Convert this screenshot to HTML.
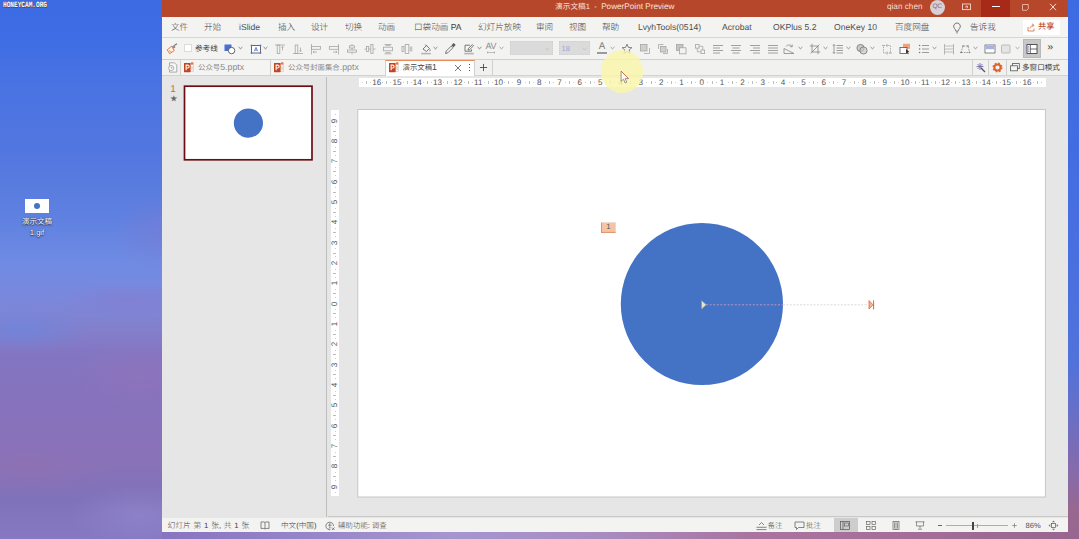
<!DOCTYPE html><html lang="zh"><head><meta charset="utf-8"><title>演示文稿1 - PowerPoint Preview</title><style>
*{margin:0;padding:0;box-sizing:border-box}
html,body{width:1079px;height:539px;overflow:hidden}
body{position:relative;text-rendering:geometricPrecision;-webkit-font-smoothing:antialiased;font-family:"Liberation Sans","Noto Sans CJK SC",sans-serif;
 background:#6a78d6;}
.abs{position:absolute}
.t{position:absolute;white-space:nowrap;line-height:1}
#desk{position:absolute;left:0;top:0;width:1079px;height:539px;background:#8577bd}
#dl{position:absolute;left:0;top:0;width:163px;height:539px;background:
  radial-gradient(ellipse 45px 40px at 160px 232px, rgba(124,122,208,.5), rgba(124,122,208,0) 100%),
  radial-gradient(ellipse 70px 22px at 20px 330px, rgba(108,134,222,.75), rgba(108,134,222,0) 100%),
  radial-gradient(ellipse 80px 18px at 130px 300px, rgba(134,124,206,.6), rgba(134,124,206,0) 100%),
  radial-gradient(ellipse 70px 35px at 140px 375px, rgba(150,116,184,.5), rgba(150,116,184,0) 100%),
  radial-gradient(ellipse 80px 25px at 30px 470px, rgba(150,112,176,.45), rgba(150,112,176,0) 100%),
  radial-gradient(ellipse 70px 30px at 140px 515px, rgba(148,138,208,.6), rgba(148,138,208,0) 100%),
  linear-gradient(180deg,#3d6be4 0px,#3f6de4 45px,#4872e3 75px,#5377df 155px,#5e80e0 215px,#6f8be3 262px,#7a88dc 300px,#8380cc 328px,#8375c2 355px,#8672bd 400px,#8a72b8 455px,#8072ba 500px,#8679c2 539px)}
#dr{position:absolute;left:1067px;top:0;width:12px;height:539px;background:
  linear-gradient(180deg,#3d6be4 0px,#426de2 150px,#4a70df 270px,#5072da 360px,#6270cc 400px,#766cba 440px,#8a6aa6 480px,#98688f 510px,#9a6690 539px)}
#db{position:absolute;left:162px;top:530px;width:906px;height:9px;background:
  linear-gradient(90deg,#8873c0 0px,#9585c8 140px,#a596cf 290px,#a88cc0 440px,#a9749f 590px,#a46e98 740px,#98668f 906px)}
#win{position:absolute;left:162px;top:0;width:906px;height:532px;background:#e6e6e6;overflow:hidden}
#title{position:absolute;left:0;top:0;width:906px;height:17px;background:#b7472a}
#menu{position:absolute;left:0;top:17px;width:906px;height:20px;background:#f3f3f2}
#tool{position:absolute;left:0;top:37px;width:906px;height:22px;background:#f3f3f2;border-top:1px solid #d6d6d6}
#tabs{position:absolute;left:0;top:59px;width:906px;height:17px;background:#f1f1f0;border-top:1px solid #cfcfcf;border-bottom:1px solid #d2d2d2}
#status{position:absolute;left:0;top:518px;width:906px;height:14px;background:#f3f3f2}
.m{font-size:8.6px;color:#404040;top:5.5px;font-weight:300}
.s{font-size:7.8px;color:#444;top:4px;font-weight:300}
.tb{font-size:8px;color:#444}
</style></head><body>
<div id="desk"><div id="dl"></div><div id="dr"></div><div id="db"></div></div>
<div class="t" style="left:3px;top:1.6px;font-family:'Liberation Mono',monospace;font-weight:bold;font-size:6.2px;letter-spacing:-0.05px;color:#fff;text-shadow:0.6px 0.5px 0 #55503f,0 0 1px #334;transform:scaleY(1.32);transform-origin:0 0">HONEYCAM.ORG</div>
<div class="abs" style="left:25px;top:199px;width:24px;height:13.5px;background:#fff"></div>
<div class="abs" style="left:33.7px;top:203px;width:6px;height:6px;border-radius:50%;background:#4472c4"></div>
<div class="t" style="left:7px;width:60px;text-align:center;top:217.5px;font-size:7.6px;color:#fff;text-shadow:0 1px 1.5px #223,0 0 1px #223">演示文稿</div>
<div class="t" style="left:7px;width:60px;text-align:center;top:228.5px;font-size:7.6px;color:#fff;text-shadow:0 1px 1.5px #223,0 0 1px #223">1.gif</div>
<div id="win">
<div id="title">
<div class="t" style="left:393px;top:2.8px;font-size:7.7px;color:#f8e4dd;font-weight:400">演示文稿1&nbsp; -&nbsp; <span style="font-size:8.2px;font-weight:400">PowerPoint Preview</span></div>
<div class="t" style="left:725px;top:2.8px;font-size:8.2px;color:#f6dcd4">qian chen</div>
<div class="abs" style="left:767.5px;top:-0.5px;width:15px;height:15px;border-radius:50%;background:#d9cfd6"></div>
<div class="t" style="left:770.5px;top:4px;font-size:6.5px;color:#8a6a80;letter-spacing:-0.3px">QC</div>
<svg class="abs" style="left:799px;top:2px" width="11" height="10" viewBox="0 0 11 10"><rect x="1.5" y="2" width="8" height="5.6" fill="none" stroke="#f3d5cb" stroke-width="0.9"/><path d="M4 4.8h3M5.500 3.500l1.500 1.300-1.500 1.300" stroke="#f3d5cb" stroke-width="0.8" fill="none"/></svg>
<div class="abs" style="left:819px;top:0;width:29px;height:17px;background:#a72a18"></div>
<div class="abs" style="left:830px;top:6px;width:7.5px;height:1.3px;background:#fff"></div>
<svg class="abs" style="left:858.5px;top:2.5px" width="9" height="9" viewBox="0 0 9 9"><path d="M1.500 1.500h5.800v4.300l-1.500 1.500h-4.300z" fill="none" stroke="#f0c8ba" stroke-width="0.8"/></svg>
<svg class="abs" style="left:887px;top:2.5px" width="8" height="8" viewBox="0 0 8 8"><path d="M1 0.8l6 6.4M7 0.8l-6 6.4" fill="none" stroke="#f6dcd4" stroke-width="1"/></svg>
</div>
<div id="menu">
<div class="t m" style="left:9px">文件</div>
<div class="t m" style="left:42px">开始</div>
<div class="t m" style="left:77px;color:#505050">iSlide</div>
<div class="t m" style="left:116px">插入</div>
<div class="t m" style="left:149px">设计</div>
<div class="t m" style="left:183px">切换</div>
<div class="t m" style="left:216px">动画</div>
<div class="t m" style="left:252px">口袋动画 PA</div>
<div class="t m" style="left:316px">幻灯片放映</div>
<div class="t m" style="left:374px">审阅</div>
<div class="t m" style="left:407px">视图</div>
<div class="t m" style="left:440px">帮助</div>
<div class="t m" style="left:476px;color:#505050">LvyhTools(0514)</div>
<div class="t m" style="left:560px;color:#505050">Acrobat</div>
<div class="t m" style="left:611px;color:#505050">OKPlus 5.2</div>
<div class="t m" style="left:672px;color:#505050">OneKey 10</div>
<div class="t m" style="left:733px">百度网盘</div>
<div class="t m" style="left:808px">告诉我</div>
<svg class="abs" style="left:790px;top:5px" width="10" height="13" viewBox="0 0 10 13"><path d="M5 1a3.300 3.300 0 0 0-2.300 5.700c.6.700 1 1.500 1.200 2.500h2.200c.2-1 .6-1.800 1.200-2.500A3.300 3.300 0 0 0 5 1z" fill="none" stroke="#5a5a5a" stroke-width="0.8"/><path d="M4 10.500h2l-1 1.300z" fill="#5a5a5a"/></svg>
<div class="abs" style="left:861px;top:2.5px;width:36.5px;height:15px;background:#fff"></div>
<svg class="abs" style="left:865px;top:5.5px" width="9" height="9" viewBox="0 0 9 9"><path d="M1 4v4h6V5.5" fill="none" stroke="#d3673e" stroke-width="0.8"/><path d="M3 5.5c.4-2 1.8-3 3.4-3.2M5 0.8l2 1.5-1.6 1.8" fill="none" stroke="#d3673e" stroke-width="0.8"/></svg>
<div class="t" style="left:876px;top:5.5px;font-size:8.2px;color:#c04e26;font-weight:500">共享</div>
</div>
<div id="tool"></div>
<svg class="abs" style="left:4px;top:42.5px" width="12" height="12" viewBox="0 0 12 12"><path d="M1.2 6.800l4.300-3.600 2.800 4.300-4.600 3.200z" fill="#fff3ea" stroke="#e8773c" stroke-width="1" stroke-linejoin="round"/><path d="M3 7.500l2.600 1.500" stroke="#e8773c" stroke-width="0.700"/><path d="M6 3.600l2-1.600 1.500 2.200-2 1.500z" fill="#8a8a8a"/><path d="M8.300 2.500l2.700-1.700" stroke="#777" stroke-width="1.300"/></svg>
<div class="abs" style="left:21.7px;top:44.3px;width:8px;height:8px;background:#fff;border:1px solid #dcdcdc"></div>
<div class="t" style="left:33px;top:44.6px;font-size:7.6px;color:#333">参考线</div>
<svg class="abs" style="left:61.5px;top:42.5px" width="12" height="12" viewBox="0 0 12 12"><rect x="0.5" y="1.5" width="7" height="6.5" fill="#4a6fd1"/><circle cx="7.6" cy="7.6" r="3.2" fill="#fff" stroke="#444" stroke-width="0.8"/></svg>
<svg class="abs" style="left:75.8px;top:46px" width="5" height="4" viewBox="0 0 5 4"><path d="M0.6 1l1.9 1.8L4.4 1" fill="none" stroke="#666" stroke-width="0.8"/></svg>
<svg class="abs" style="left:87.7px;top:42.5px" width="12" height="12" viewBox="0 0 12 12"><rect x="1.5" y="2.5" width="9" height="7.5" fill="#fff" stroke="#444" stroke-width="0.8"/><g fill="#5a78d8"><circle cx="1.5" cy="2.5" r="0.9"/><circle cx="10.5" cy="2.5" r="0.9"/><circle cx="1.5" cy="10" r="0.9"/><circle cx="10.5" cy="10" r="0.9"/></g><path d="M4.3 8.3l1.7-4 1.7 4M4.9 7h2.2" fill="none" stroke="#4a6fd1" stroke-width="0.8"/></svg>
<svg class="abs" style="left:100.8px;top:46px" width="5" height="4" viewBox="0 0 5 4"><path d="M0.6 1l1.9 1.8L4.4 1" fill="none" stroke="#666" stroke-width="0.8"/></svg>
<svg class="abs" style="left:112px;top:42.5px" width="12" height="12" viewBox="0 0 12 12"><path d="M1 2h10" fill="none" stroke="#a6a6a6" stroke-width="0.8"/><rect x="3.2" y="2" width="2.6" height="8.5" fill="none" stroke="#a6a6a6" stroke-width="0.8"/><path d="M8.5 7.5v-4M7.5 4.5l1-1.2 1 1.2" fill="none" stroke="#a6a6a6" stroke-width="0.8"/></svg>
<svg class="abs" style="left:129.8px;top:42.5px" width="12" height="12" viewBox="0 0 12 12"><path d="M1 10.5h10" fill="none" stroke="#a6a6a6" stroke-width="0.8"/><rect x="3.2" y="2" width="2.6" height="8.5" fill="none" stroke="#a6a6a6" stroke-width="0.8"/><path d="M8.5 4.5v4M7.5 7.5l1 1.2 1-1.2" fill="none" stroke="#a6a6a6" stroke-width="0.8"/></svg>
<svg class="abs" style="left:147.6px;top:42.5px" width="12" height="12" viewBox="0 0 12 12"><path d="M1.5 1v10.5" fill="none" stroke="#a6a6a6" stroke-width="0.8"/><rect x="1.5" y="3.5" width="9" height="2.8" fill="none" stroke="#a6a6a6" stroke-width="0.8"/><path d="M7 9h-4M4.2 8l-1.2 1 1.2 1" fill="none" stroke="#a6a6a6" stroke-width="0.8"/></svg>
<svg class="abs" style="left:166.4px;top:42.5px" width="12" height="12" viewBox="0 0 12 12"><path d="M10.5 1v10.5" fill="none" stroke="#a6a6a6" stroke-width="0.8"/><rect x="1.5" y="3.5" width="9" height="2.8" fill="none" stroke="#a6a6a6" stroke-width="0.8"/><path d="M5 9h4M7.8 8l1.2 1-1.2 1" fill="none" stroke="#a6a6a6" stroke-width="0.8"/></svg>
<svg class="abs" style="left:184.2px;top:42.5px" width="12" height="12" viewBox="0 0 12 12"><path d="M6 1v10.5" fill="none" stroke="#a6a6a6" stroke-width="0.8"/><rect x="3.5" y="2.8" width="5" height="2.2" fill="#f3f3f2" stroke="#a6a6a6" stroke-width="0.8"/><rect x="1.5" y="7" width="9" height="2.2" fill="#f3f3f2" stroke="#a6a6a6" stroke-width="0.8"/></svg>
<svg class="abs" style="left:202px;top:42.5px" width="12" height="12" viewBox="0 0 12 12"><path d="M0.5 6h11" fill="none" stroke="#a6a6a6" stroke-width="0.8"/><rect x="2.5" y="3.5" width="2.2" height="5" fill="#f3f3f2" stroke="#a6a6a6" stroke-width="0.8"/><rect x="6.8" y="1.5" width="2.2" height="9" fill="#f3f3f2" stroke="#a6a6a6" stroke-width="0.8"/></svg>
<svg class="abs" style="left:220px;top:42.5px" width="12" height="12" viewBox="0 0 12 12"><path d="M2.5 1.5h7M2.5 10.8h7" fill="none" stroke="#a6a6a6" stroke-width="0.8"/><rect x="1.5" y="4.2" width="9" height="3.6" fill="none" stroke="#a6a6a6" stroke-width="0.8"/><path d="M3.5 2.6h5M3.5 9.6h5" fill="none" stroke="#a6a6a6" stroke-width="0.8"/></svg>
<svg class="abs" style="left:239px;top:42.5px" width="12" height="12" viewBox="0 0 12 12"><rect x="4.2" y="1.5" width="3.6" height="9" fill="none" stroke="#a6a6a6" stroke-width="0.8"/><rect x="1" y="3.5" width="2" height="5" fill="none" stroke="#a6a6a6" stroke-width="0.8"/><path d="M9.3 3.5v5M10.8 3.5v5" fill="none" stroke="#a6a6a6" stroke-width="0.8"/></svg>
<svg class="abs" style="left:257.5px;top:42.5px" width="12" height="12" viewBox="0 0 12 12"><path d="M3 6l3.5-3.5 3 3L6.5 8.5z" fill="none" stroke="#5a5a5a" stroke-width="0.8"/><path d="M5.2 1.5l2 2" fill="none" stroke="#5a5a5a" stroke-width="0.8"/><path d="M10 6.5v1.6" fill="none" stroke="#5a5a5a" stroke-width="0.8"/><rect x="1.2" y="9.8" width="9.6" height="1.6" fill="#b5b5b5"/></svg>
<svg class="abs" style="left:271px;top:46px" width="5" height="4" viewBox="0 0 5 4"><path d="M0.6 1l1.9 1.8L4.4 1" fill="none" stroke="#666" stroke-width="0.8"/></svg>
<svg class="abs" style="left:281.5px;top:42px" width="13" height="13" viewBox="0 0 13 13"><path d="M1.5 11.5l.7-2.4 5-5 1.700 1.700-5 5z" fill="none" stroke="#5a5a5a" stroke-width="0.8"/><path d="M7.400 3.300l2.300-2.300 2 2-2.300 2.300z" fill="#5a5a5a"/></svg>
<svg class="abs" style="left:301px;top:42.5px" width="12" height="12" viewBox="0 0 12 12"><path d="M2 2.2h5M2 2.2v6h6.5V6.5" fill="none" stroke="#5a5a5a" stroke-width="0.8"/><path d="M5 7l.5-1.6 3.8-3.8 1.2 1.2-3.8 3.8z" fill="none" stroke="#5a5a5a" stroke-width="0.8"/><rect x="1.2" y="9.8" width="9.6" height="1.6" fill="#b5b5b5"/></svg>
<svg class="abs" style="left:314.5px;top:46px" width="5" height="4" viewBox="0 0 5 4"><path d="M0.6 1l1.9 1.8L4.4 1" fill="none" stroke="#666" stroke-width="0.8"/></svg>
<div class="t" style="left:323.6px;top:42px;font-size:9px;color:#8c8c8c;letter-spacing:-0.500px">AV</div>
<svg class="abs" style="left:323.7px;top:50.8px" width="10" height="3" viewBox="0 0 10 3"><path d="M1 1.5h8M2.2 0.4l-1.2 1.1 1.2 1.1M7.8 0.4l1.2 1.1-1.2 1.1" fill="none" stroke="#9a9a9a" stroke-width="0.6"/></svg>
<svg class="abs" style="left:337.3px;top:46px" width="5" height="4" viewBox="0 0 5 4"><path d="M0.6 1l1.9 1.8L4.4 1" fill="none" stroke="#888" stroke-width="0.8"/></svg>
<div class="abs" style="left:348.4px;top:40.5px;width:43px;height:14.5px;background:#dbdbdb;border:1px dotted #d0d0d0"></div>
<div class="abs" style="left:397px;top:40.5px;width:31px;height:14.5px;background:#dbdbdb;border:1px dotted #d0d0d0"></div>
<div class="t" style="left:399.5px;top:44.5px;font-size:7.5px;color:#9aa6d8">18</div>
<svg class="abs" style="left:382.5px;top:46.5px" width="5" height="4" viewBox="0 0 5 4"><path d="M0.6 1l1.9 1.8L4.4 1" fill="none" stroke="#bdbdbd" stroke-width="0.8"/></svg>
<svg class="abs" style="left:419.5px;top:46.5px" width="5" height="4" viewBox="0 0 5 4"><path d="M0.6 1l1.9 1.8L4.4 1" fill="none" stroke="#bdbdbd" stroke-width="0.8"/></svg>
<div class="t" style="left:436.8px;top:42.4px;font-size:9.700px;color:#7c7c7c">A</div>
<div class="abs" style="left:435px;top:52.3px;width:10px;height:1.6px;background:#9a9a9a"></div>
<svg class="abs" style="left:447.5px;top:46px" width="5" height="4" viewBox="0 0 5 4"><path d="M0.6 1l1.9 1.8L4.4 1" fill="none" stroke="#888" stroke-width="0.8"/></svg>
<svg class="abs" style="left:458.7px;top:42.5px" width="12" height="12" viewBox="0 0 12 12"><path d="M6 1.2l1.4 3.2 3.4.3-2.6 2.2.8 3.4L6 8.5 3 10.3l.8-3.4L1.2 4.7l3.4-.3z" fill="none" stroke="#666" stroke-width="0.8"/></svg>
<svg class="abs" style="left:477px;top:42.5px" width="12" height="12" viewBox="0 0 12 12"><rect x="1.5" y="1.5" width="6.5" height="6.5" fill="#cfcfcf" stroke="#a6a6a6" stroke-width="0.8"/><path d="M10.5 5v5.5H5" fill="none" stroke="#a6a6a6" stroke-width="0.8"/></svg>
<svg class="abs" style="left:495.4px;top:42.5px" width="12" height="12" viewBox="0 0 12 12"><path d="M1.5 6V1.5h5" fill="none" stroke="#a6a6a6" stroke-width="0.8"/><rect x="3.5" y="3.5" width="5.5" height="5.5" fill="#cfcfcf" stroke="#a6a6a6" stroke-width="0.8"/><path d="M10.5 6v4.5H6" fill="none" stroke="#a6a6a6" stroke-width="0.8"/></svg>
<svg class="abs" style="left:513px;top:42.5px" width="12" height="12" viewBox="0 0 12 12"><rect x="1.5" y="1.5" width="6.5" height="6" fill="#c4c4c4" stroke="#a6a6a6" stroke-width="0.8"/><rect x="4.5" y="4.8" width="6.5" height="6" fill="#f3f3f2" stroke="#a6a6a6" stroke-width="0.8"/></svg>
<svg class="abs" style="left:531.6px;top:42.5px" width="12" height="12" viewBox="0 0 12 12"><rect x="1.5" y="1.5" width="3.6" height="3.6" fill="none" stroke="#a6a6a6" stroke-width="0.8"/><rect x="7" y="7" width="3.6" height="3.6" fill="none" stroke="#a6a6a6" stroke-width="0.8"/><path d="M3.3 5.1v3.7h3.7M8.8 7V3.3H5.1" fill="none" stroke="#a6a6a6" stroke-width="0.8"/></svg>
<svg class="abs" style="left:549.9px;top:42.5px" width="12" height="12" viewBox="0 0 12 12"><path d="M1 2.5h10M1 5h7M1 7.5h10M1 10h7" fill="none" stroke="#8c8c8c" stroke-width="0.8"/></svg>
<svg class="abs" style="left:568px;top:42.5px" width="12" height="12" viewBox="0 0 12 12"><path d="M1 2.5h10M2.5 5h7M1 7.5h10M2.5 10h7" fill="none" stroke="#8c8c8c" stroke-width="0.8"/></svg>
<svg class="abs" style="left:586.6px;top:42.5px" width="12" height="12" viewBox="0 0 12 12"><path d="M1 2.5h10M4 5h7M1 7.5h10M4 10h7" fill="none" stroke="#8c8c8c" stroke-width="0.8"/></svg>
<svg class="abs" style="left:604.8px;top:42.5px" width="12" height="12" viewBox="0 0 12 12"><path d="M1 2.5h10M1 5h10M1 7.5h10M1 10h10" fill="none" stroke="#8c8c8c" stroke-width="0.8"/></svg>
<svg class="abs" style="left:621px;top:42.5px" width="12" height="12" viewBox="0 0 12 12"><path d="M1 10.5h10L1 5.5z" fill="none" stroke="#858585" stroke-width="0.8"/><path d="M3 3.5c1.5-2 4.5-2 6 0M9.2 1.5v2.2H7" fill="none" stroke="#858585" stroke-width="0.8"/></svg>
<svg class="abs" style="left:635.5px;top:46px" width="5" height="4" viewBox="0 0 5 4"><path d="M0.6 1l1.9 1.8L4.4 1" fill="none" stroke="#777" stroke-width="0.8"/></svg>
<svg class="abs" style="left:647px;top:42.5px" width="12" height="12" viewBox="0 0 12 12"><path d="M3 0.8v8.2h8.2M0.8 3h8.2v8.2" fill="none" stroke="#858585" stroke-width="0.8"/><path d="M1.5 10.5l9-9" fill="none" stroke="#858585" stroke-width="0.8"/></svg>
<svg class="abs" style="left:660.5px;top:46px" width="5" height="4" viewBox="0 0 5 4"><path d="M0.6 1l1.9 1.8L4.4 1" fill="none" stroke="#777" stroke-width="0.8"/></svg>
<svg class="abs" style="left:670px;top:42.5px" width="12" height="12" viewBox="0 0 12 12"><path d="M4.5 2.5h6.5M4.5 5h6.5M4.5 7.5h6.5M4.5 10h6.5" fill="none" stroke="#858585" stroke-width="0.8"/><path d="M2 1.5v9M0.9 2.8L2 1.5l1.1 1.3M0.9 9.2L2 10.5l1.1-1.3" fill="none" stroke="#858585" stroke-width="0.8"/></svg>
<svg class="abs" style="left:684px;top:46px" width="5" height="4" viewBox="0 0 5 4"><path d="M0.6 1l1.9 1.8L4.4 1" fill="none" stroke="#777" stroke-width="0.8"/></svg>
<svg class="abs" style="left:693.5px;top:42.5px" width="12" height="12" viewBox="0 0 12 12"><circle cx="4.5" cy="5" r="3.6" fill="#c9c9c9" stroke="#777" stroke-width="0.8"/><circle cx="7.5" cy="7.5" r="3.6" fill="#c9c9c9" fill-opacity=".7" stroke="#777" stroke-width="0.8"/></svg>
<svg class="abs" style="left:708.1px;top:46px" width="5" height="4" viewBox="0 0 5 4"><path d="M0.6 1l1.9 1.8L4.4 1" fill="none" stroke="#777" stroke-width="0.8"/></svg>
<svg class="abs" style="left:719px;top:42.5px" width="12" height="12" viewBox="0 0 12 12"><rect x="2.5" y="2.5" width="7" height="7.5" fill="none" stroke="#999" stroke-width="0.8" stroke-dasharray="1.4 1"/><path d="M1 2.5h3M6 1v3M6 8.5v3M8 10h3" fill="none" stroke="#a6a6a6" stroke-width="0.8"/></svg>
<svg class="abs" style="left:737.3px;top:42.5px" width="12" height="12" viewBox="0 0 12 12"><rect x="4" y="0.8" width="7" height="5" fill="#f0a27a"/><rect x="1" y="4.5" width="7" height="6" fill="#fff" stroke="#555" stroke-width="0.8"/><path d="M7 6l3.4 3-1.5.2.8 1.6-.8.4-.8-1.6L7 10.6z" fill="#333"/></svg>
<svg class="abs" style="left:755.5px;top:42.5px" width="12" height="12" viewBox="0 0 12 12"><path d="M4 2.5h7M4 6h7M4 9.5h7" fill="none" stroke="#858585" stroke-width="0.8"/><g fill="#777"><circle cx="1.6" cy="2.5" r="0.8"/><circle cx="1.6" cy="6" r="0.8"/><circle cx="1.6" cy="9.5" r="0.8"/></g></svg>
<svg class="abs" style="left:769.5px;top:46px" width="5" height="4" viewBox="0 0 5 4"><path d="M0.6 1l1.9 1.8L4.4 1" fill="none" stroke="#777" stroke-width="0.8"/></svg>
<svg class="abs" style="left:780.5px;top:42.5px" width="12" height="12" viewBox="0 0 12 12"><path d="M1.5 1v10.5M10.5 1v10.5" fill="none" stroke="#a6a6a6" stroke-width="0.8"/><path d="M1.5 3h9M1.5 6h9M1.5 9h9" fill="none" stroke="#b0b0b0" stroke-width="0.8"/></svg>
<svg class="abs" style="left:796.7px;top:42.5px" width="12" height="12" viewBox="0 0 12 12"><path d="M2 9.5l2-6.5h5l1.5 6.5z" fill="none" stroke="#888" stroke-width="0.8" stroke-dasharray="1.6 0.9"/><g fill="#777"><circle cx="2" cy="9.5" r=".8"/><circle cx="4" cy="3" r=".8"/><circle cx="9" cy="3" r=".8"/><circle cx="10.5" cy="9.5" r=".8"/></g></svg>
<svg class="abs" style="left:811px;top:46px" width="5" height="4" viewBox="0 0 5 4"><path d="M0.6 1l1.9 1.8L4.4 1" fill="none" stroke="#777" stroke-width="0.8"/></svg>
<svg class="abs" style="left:822px;top:42.5px" width="12" height="12" viewBox="0 0 12 12"><rect x="1" y="2" width="10" height="8" fill="#fff" stroke="#666" stroke-width="0.8"/><rect x="1.800" y="2.800" width="8.400" height="3.400" fill="#a9b0e6"/></svg>
<svg class="abs" style="left:838px;top:42.5px" width="12" height="12" viewBox="0 0 12 12"><rect x="1.5" y="2" width="8.5" height="8" rx="0.8" fill="#e4e4e4" stroke="#b0b0b0" stroke-width="0.8"/></svg>
<svg class="abs" style="left:853.1px;top:46px" width="5" height="4" viewBox="0 0 5 4"><path d="M0.6 1l1.9 1.8L4.4 1" fill="none" stroke="#999" stroke-width="0.8"/></svg>
<div class="abs" style="left:861.3px;top:38.5px;width:18px;height:19.5px;background:#c8c8c8;border:1px solid #b9b9b9"></div>
<svg class="abs" style="left:864.2px;top:42.5px" width="12" height="12" viewBox="0 0 12 12"><rect x="1" y="1.5" width="10" height="9" fill="#fff" stroke="#444" stroke-width="0.9"/><path d="M4.3 1.5v9M4.3 6h6.7" stroke="#444" stroke-width="0.8"/><g fill="#4a6fd1"><circle cx="2.6" cy="3.8" r=".6"/><circle cx="2.6" cy="6" r=".6"/><circle cx="2.6" cy="8.2" r=".6"/></g></svg>
<div class="t" style="left:885.3px;top:42.3px;font-size:10.500px;color:#444">»</div>
<div id="tabs"></div>
<svg class="abs" style="left:4.5px;top:62px" width="11" height="11" viewBox="0 0 11 11"><path d="M2.5 0.8h5l2.3 2.3v7H2.5z" fill="#f7f7f7" stroke="#999" stroke-width="0.8"/><circle cx="4.2" cy="6" r="2.6" fill="#f7f7f7" stroke="#999" stroke-width="0.7"/><path d="M4.2 4.6V6h1.3" fill="none" stroke="#7a8ad0" stroke-width="0.7"/></svg>
<div class="abs" style="left:18px;top:60px;width:1px;height:15px;background:#d0d0d0"></div>
<div class="abs" style="left:19px;top:60px;width:205px;height:15px;background:#f4f4f3"></div>
<svg class="abs" style="left:21.7px;top:61.8px" width="11" height="11" viewBox="0 0 11 11"><rect x="4" y="1.6" width="5.600" height="8" fill="#f7f0ee" stroke="#cdbdb6" stroke-width="0.500"/><rect x="7" y="0.300" width="2.300" height="2.300" fill="#e8773c"/><rect x="0" y="0.900" width="6.600" height="9.300" rx="0.400" fill="#c2431f"/><path d="M2.100 8.200V3.100h1.600a1.400 1.400 0 0 1 0 2.800H2.100" fill="none" stroke="#fff" stroke-width="1.050"/><path d="M7 5.200h2M7 7h2" stroke="#d8a392" stroke-width="0.600"/></svg>
<div class="t" style="left:36px;top:62.6px;font-size:8.8px;color:#8a8a8a"><span style="font-size:7.4px">公众号</span>5.pptx</div>
<div class="abs" style="left:108px;top:60px;width:1px;height:15px;background:#d0d0d0"></div>
<svg class="abs" style="left:111.9px;top:61.8px" width="11" height="11" viewBox="0 0 11 11"><rect x="4" y="1.6" width="5.600" height="8" fill="#f7f0ee" stroke="#cdbdb6" stroke-width="0.500"/><rect x="7" y="0.300" width="2.300" height="2.300" fill="#e8773c"/><rect x="0" y="0.900" width="6.600" height="9.300" rx="0.400" fill="#c2431f"/><path d="M2.100 8.200V3.100h1.600a1.400 1.400 0 0 1 0 2.800H2.100" fill="none" stroke="#fff" stroke-width="1.050"/><path d="M7 5.200h2M7 7h2" stroke="#d8a392" stroke-width="0.600"/></svg>
<div class="t" style="left:126px;top:62.6px;font-size:8.8px;color:#8a8a8a"><span style="font-size:7.4px">公众号封面集合</span>.pptx</div>
<div class="abs" style="left:223px;top:60px;width:90px;height:16px;background:#fff;border-top:1px solid #e88a5c;border-left:1px solid #d0d0d0;border-right:1px solid #d0d0d0"></div>
<svg class="abs" style="left:226.5px;top:61.8px" width="11" height="11" viewBox="0 0 11 11"><rect x="4" y="1.6" width="5.600" height="8" fill="#f7f0ee" stroke="#cdbdb6" stroke-width="0.500"/><rect x="7" y="0.300" width="2.300" height="2.300" fill="#e8773c"/><rect x="0" y="0.900" width="6.600" height="9.300" rx="0.400" fill="#c2431f"/><path d="M2.100 8.200V3.100h1.600a1.400 1.400 0 0 1 0 2.800H2.100" fill="none" stroke="#fff" stroke-width="1.050"/><path d="M7 5.200h2M7 7h2" stroke="#d8a392" stroke-width="0.600"/></svg>
<div class="t" style="left:240.5px;top:62.6px;font-size:8.8px;color:#444"><span style="font-size:7.4px">演示文稿</span>1</div>
<svg class="abs" style="left:292px;top:64px" width="8" height="8" viewBox="0 0 8 8"><path d="M1 1l6 6M7 1l-6 6" stroke="#555" stroke-width="0.8"/></svg>
<div class="abs" style="left:306.5px;top:64px;width:1.2px;height:1.2px;background:#555;box-shadow:0 3px 0 #555,0 6px 0 #555"></div>
<svg class="abs" style="left:317px;top:63px" width="9" height="9" viewBox="0 0 9 9"><path d="M4.500 0.900v7.200M0.900 4.500h7.200" stroke="#4a4a4a" stroke-width="0.900"/></svg>
<div class="abs" style="left:330px;top:60px;width:1px;height:15px;background:#d0d0d0"></div>
<div class="abs" style="left:810px;top:60px;width:1px;height:15px;background:#d0d0d0"></div>
<svg class="abs" style="left:812.5px;top:62px" width="11" height="11" viewBox="0 0 11 11"><path d="M5 1v7M1.5 4.5h7M2.5 2l5 5M7.5 2l-5 5" stroke="#7a6ab0" stroke-width="0.9"/><path d="M6 6l4 4" stroke="#555" stroke-width="1.3"/></svg>
<div class="abs" style="left:826px;top:60px;width:1px;height:15px;background:#d0d0d0"></div>
<svg class="abs" style="left:829.8px;top:62px" width="11" height="11" viewBox="0 0 11 11"><circle cx="5.5" cy="5.5" r="3.1" fill="none" stroke="#e2622c" stroke-width="2"/><circle cx="5.5" cy="5.5" r="4.3" fill="none" stroke="#e2622c" stroke-width="1.4" stroke-dasharray="1.7 1.7"/></svg>
<div class="abs" style="left:844px;top:60px;width:1px;height:15px;background:#d0d0d0"></div>
<svg class="abs" style="left:848px;top:63px" width="10" height="9" viewBox="0 0 10 9"><rect x="2.5" y="0.6" width="6.8" height="5" fill="#f4f4f4" stroke="#555" stroke-width="0.8"/><rect x="0.6" y="2.8" width="6.8" height="5" fill="#f4f4f4" stroke="#555" stroke-width="0.8"/></svg>
<div class="t" style="left:860px;top:63.5px;font-size:7.6px;color:#3a3a3a">多窗口模式</div>
<div class="abs" style="left:164px;top:77px;width:1px;height:440px;background:#bebebe"></div>
<div class="t" style="left:8.3px;top:84.8px;font-size:10px;color:#d0683a">1</div>
<div class="t" style="left:8.3px;top:96.2px;font-size:7px;color:#6a6a6a">★</div>
<svg class="abs" style="left:20px;top:84px" width="134" height="80" viewBox="0 0 134 80"><rect x="2.5" y="2.2" width="127.500" height="73.600" fill="#fff" stroke="#6c0e14" stroke-width="1.700"/><circle cx="66.400" cy="39.100" r="14.600" fill="#4472c4"/></svg>
<svg class="abs" style="left:190px;top:104px" width="700" height="400" viewBox="0 0 700 400"><rect x="5.800" y="5.500" width="687.600" height="387.500" fill="#fff" stroke="#c2c2c2" stroke-width="0.900"/></svg>
<svg class="abs" style="left:450px;top:215px" width="180" height="180" viewBox="0 0 180 180"><circle cx="89.900" cy="89" r="81.100" fill="#4472c4"/></svg>
<div class="abs" id="hr" style="left:197px;top:78px;width:687px;height:9px;background:#fff"></div>
<div class="abs" id="vr" style="left:169px;top:110px;width:8px;height:386px;background:#fff"></div>
<div class="t" style="left:206.68px;top:78.8px;width:16px;text-align:center;font-size:8.1px;color:#555">16</div>
<div class="t" style="left:227px;top:78.8px;width:16px;text-align:center;font-size:8.1px;color:#555">15</div>
<div class="t" style="left:247.32px;top:78.8px;width:16px;text-align:center;font-size:8.1px;color:#555">14</div>
<div class="t" style="left:267.64px;top:78.8px;width:16px;text-align:center;font-size:8.1px;color:#555">13</div>
<div class="t" style="left:287.96px;top:78.8px;width:16px;text-align:center;font-size:8.1px;color:#555">12</div>
<div class="t" style="left:308.28px;top:78.8px;width:16px;text-align:center;font-size:8.1px;color:#555">11</div>
<div class="t" style="left:328.6px;top:78.8px;width:16px;text-align:center;font-size:8.1px;color:#555">10</div>
<div class="t" style="left:348.92px;top:78.8px;width:16px;text-align:center;font-size:8.1px;color:#555">9</div>
<div class="t" style="left:369.24px;top:78.8px;width:16px;text-align:center;font-size:8.1px;color:#555">8</div>
<div class="t" style="left:389.56px;top:78.8px;width:16px;text-align:center;font-size:8.1px;color:#555">7</div>
<div class="t" style="left:409.88px;top:78.8px;width:16px;text-align:center;font-size:8.1px;color:#555">6</div>
<div class="t" style="left:430.2px;top:78.8px;width:16px;text-align:center;font-size:8.1px;color:#555">5</div>
<div class="t" style="left:450.52px;top:78.8px;width:16px;text-align:center;font-size:8.1px;color:#555">4</div>
<div class="t" style="left:470.84px;top:78.8px;width:16px;text-align:center;font-size:8.1px;color:#555">3</div>
<div class="t" style="left:491.16px;top:78.8px;width:16px;text-align:center;font-size:8.1px;color:#555">2</div>
<div class="t" style="left:511.48px;top:78.8px;width:16px;text-align:center;font-size:8.1px;color:#555">1</div>
<div class="t" style="left:531.8px;top:78.8px;width:16px;text-align:center;font-size:8.1px;color:#555">0</div>
<div class="t" style="left:552.12px;top:78.8px;width:16px;text-align:center;font-size:8.1px;color:#555">1</div>
<div class="t" style="left:572.44px;top:78.8px;width:16px;text-align:center;font-size:8.1px;color:#555">2</div>
<div class="t" style="left:592.76px;top:78.8px;width:16px;text-align:center;font-size:8.1px;color:#555">3</div>
<div class="t" style="left:613.08px;top:78.8px;width:16px;text-align:center;font-size:8.1px;color:#555">4</div>
<div class="t" style="left:633.4px;top:78.8px;width:16px;text-align:center;font-size:8.1px;color:#555">5</div>
<div class="t" style="left:653.72px;top:78.8px;width:16px;text-align:center;font-size:8.1px;color:#555">6</div>
<div class="t" style="left:674.04px;top:78.8px;width:16px;text-align:center;font-size:8.1px;color:#555">7</div>
<div class="t" style="left:694.36px;top:78.8px;width:16px;text-align:center;font-size:8.1px;color:#555">8</div>
<div class="t" style="left:714.68px;top:78.8px;width:16px;text-align:center;font-size:8.1px;color:#555">9</div>
<div class="t" style="left:735px;top:78.8px;width:16px;text-align:center;font-size:8.1px;color:#555">10</div>
<div class="t" style="left:755.32px;top:78.8px;width:16px;text-align:center;font-size:8.1px;color:#555">11</div>
<div class="t" style="left:775.64px;top:78.8px;width:16px;text-align:center;font-size:8.1px;color:#555">12</div>
<div class="t" style="left:795.96px;top:78.8px;width:16px;text-align:center;font-size:8.1px;color:#555">13</div>
<div class="t" style="left:816.28px;top:78.8px;width:16px;text-align:center;font-size:8.1px;color:#555">14</div>
<div class="t" style="left:836.6px;top:78.8px;width:16px;text-align:center;font-size:8.1px;color:#555">15</div>
<div class="t" style="left:856.92px;top:78.8px;width:16px;text-align:center;font-size:8.1px;color:#555">16</div>
<div class="abs" style="left:199.956px;top:82.3px;width:1px;height:1px;background:#cacaca"></div>
<div class="abs" style="left:204.12px;top:81.3px;width:0.8px;height:2.6px;background:#bcbcbc"></div>
<div class="abs" style="left:208.084px;top:82.3px;width:1px;height:1px;background:#cacaca"></div>
<div class="abs" style="left:220.276px;top:82.3px;width:1px;height:1px;background:#cacaca"></div>
<div class="abs" style="left:224.44px;top:81.3px;width:0.8px;height:2.6px;background:#bcbcbc"></div>
<div class="abs" style="left:228.404px;top:82.3px;width:1px;height:1px;background:#cacaca"></div>
<div class="abs" style="left:240.596px;top:82.3px;width:1px;height:1px;background:#cacaca"></div>
<div class="abs" style="left:244.76px;top:81.3px;width:0.8px;height:2.6px;background:#bcbcbc"></div>
<div class="abs" style="left:248.724px;top:82.3px;width:1px;height:1px;background:#cacaca"></div>
<div class="abs" style="left:260.916px;top:82.3px;width:1px;height:1px;background:#cacaca"></div>
<div class="abs" style="left:265.08px;top:81.3px;width:0.8px;height:2.6px;background:#bcbcbc"></div>
<div class="abs" style="left:269.044px;top:82.3px;width:1px;height:1px;background:#cacaca"></div>
<div class="abs" style="left:281.236px;top:82.3px;width:1px;height:1px;background:#cacaca"></div>
<div class="abs" style="left:285.4px;top:81.3px;width:0.8px;height:2.6px;background:#bcbcbc"></div>
<div class="abs" style="left:289.364px;top:82.3px;width:1px;height:1px;background:#cacaca"></div>
<div class="abs" style="left:301.556px;top:82.3px;width:1px;height:1px;background:#cacaca"></div>
<div class="abs" style="left:305.72px;top:81.3px;width:0.8px;height:2.6px;background:#bcbcbc"></div>
<div class="abs" style="left:309.684px;top:82.3px;width:1px;height:1px;background:#cacaca"></div>
<div class="abs" style="left:321.876px;top:82.3px;width:1px;height:1px;background:#cacaca"></div>
<div class="abs" style="left:326.04px;top:81.3px;width:0.8px;height:2.6px;background:#bcbcbc"></div>
<div class="abs" style="left:330.004px;top:82.3px;width:1px;height:1px;background:#cacaca"></div>
<div class="abs" style="left:342.196px;top:82.3px;width:1px;height:1px;background:#cacaca"></div>
<div class="abs" style="left:346.36px;top:81.3px;width:0.8px;height:2.6px;background:#bcbcbc"></div>
<div class="abs" style="left:350.324px;top:82.3px;width:1px;height:1px;background:#cacaca"></div>
<div class="abs" style="left:362.516px;top:82.3px;width:1px;height:1px;background:#cacaca"></div>
<div class="abs" style="left:366.68px;top:81.3px;width:0.8px;height:2.6px;background:#bcbcbc"></div>
<div class="abs" style="left:370.644px;top:82.3px;width:1px;height:1px;background:#cacaca"></div>
<div class="abs" style="left:382.836px;top:82.3px;width:1px;height:1px;background:#cacaca"></div>
<div class="abs" style="left:387px;top:81.3px;width:0.8px;height:2.6px;background:#bcbcbc"></div>
<div class="abs" style="left:390.964px;top:82.3px;width:1px;height:1px;background:#cacaca"></div>
<div class="abs" style="left:403.156px;top:82.3px;width:1px;height:1px;background:#cacaca"></div>
<div class="abs" style="left:407.32px;top:81.3px;width:0.8px;height:2.6px;background:#bcbcbc"></div>
<div class="abs" style="left:411.284px;top:82.3px;width:1px;height:1px;background:#cacaca"></div>
<div class="abs" style="left:423.476px;top:82.3px;width:1px;height:1px;background:#cacaca"></div>
<div class="abs" style="left:427.64px;top:81.3px;width:0.8px;height:2.6px;background:#bcbcbc"></div>
<div class="abs" style="left:431.604px;top:82.3px;width:1px;height:1px;background:#cacaca"></div>
<div class="abs" style="left:443.796px;top:82.3px;width:1px;height:1px;background:#cacaca"></div>
<div class="abs" style="left:447.96px;top:81.3px;width:0.8px;height:2.6px;background:#bcbcbc"></div>
<div class="abs" style="left:451.924px;top:82.3px;width:1px;height:1px;background:#cacaca"></div>
<div class="abs" style="left:464.116px;top:82.3px;width:1px;height:1px;background:#cacaca"></div>
<div class="abs" style="left:468.28px;top:81.3px;width:0.8px;height:2.6px;background:#bcbcbc"></div>
<div class="abs" style="left:472.244px;top:82.3px;width:1px;height:1px;background:#cacaca"></div>
<div class="abs" style="left:484.436px;top:82.3px;width:1px;height:1px;background:#cacaca"></div>
<div class="abs" style="left:488.6px;top:81.3px;width:0.8px;height:2.6px;background:#bcbcbc"></div>
<div class="abs" style="left:492.564px;top:82.3px;width:1px;height:1px;background:#cacaca"></div>
<div class="abs" style="left:504.756px;top:82.3px;width:1px;height:1px;background:#cacaca"></div>
<div class="abs" style="left:508.92px;top:81.3px;width:0.8px;height:2.6px;background:#bcbcbc"></div>
<div class="abs" style="left:512.884px;top:82.3px;width:1px;height:1px;background:#cacaca"></div>
<div class="abs" style="left:525.076px;top:82.3px;width:1px;height:1px;background:#cacaca"></div>
<div class="abs" style="left:529.24px;top:81.3px;width:0.8px;height:2.6px;background:#bcbcbc"></div>
<div class="abs" style="left:533.204px;top:82.3px;width:1px;height:1px;background:#cacaca"></div>
<div class="abs" style="left:545.396px;top:82.3px;width:1px;height:1px;background:#cacaca"></div>
<div class="abs" style="left:549.56px;top:81.3px;width:0.8px;height:2.6px;background:#bcbcbc"></div>
<div class="abs" style="left:553.524px;top:82.3px;width:1px;height:1px;background:#cacaca"></div>
<div class="abs" style="left:565.716px;top:82.3px;width:1px;height:1px;background:#cacaca"></div>
<div class="abs" style="left:569.88px;top:81.3px;width:0.8px;height:2.6px;background:#bcbcbc"></div>
<div class="abs" style="left:573.844px;top:82.3px;width:1px;height:1px;background:#cacaca"></div>
<div class="abs" style="left:586.036px;top:82.3px;width:1px;height:1px;background:#cacaca"></div>
<div class="abs" style="left:590.2px;top:81.3px;width:0.8px;height:2.6px;background:#bcbcbc"></div>
<div class="abs" style="left:594.164px;top:82.3px;width:1px;height:1px;background:#cacaca"></div>
<div class="abs" style="left:606.356px;top:82.3px;width:1px;height:1px;background:#cacaca"></div>
<div class="abs" style="left:610.52px;top:81.3px;width:0.8px;height:2.6px;background:#bcbcbc"></div>
<div class="abs" style="left:614.484px;top:82.3px;width:1px;height:1px;background:#cacaca"></div>
<div class="abs" style="left:626.676px;top:82.3px;width:1px;height:1px;background:#cacaca"></div>
<div class="abs" style="left:630.84px;top:81.3px;width:0.8px;height:2.6px;background:#bcbcbc"></div>
<div class="abs" style="left:634.804px;top:82.3px;width:1px;height:1px;background:#cacaca"></div>
<div class="abs" style="left:646.996px;top:82.3px;width:1px;height:1px;background:#cacaca"></div>
<div class="abs" style="left:651.16px;top:81.3px;width:0.8px;height:2.6px;background:#bcbcbc"></div>
<div class="abs" style="left:655.124px;top:82.3px;width:1px;height:1px;background:#cacaca"></div>
<div class="abs" style="left:667.316px;top:82.3px;width:1px;height:1px;background:#cacaca"></div>
<div class="abs" style="left:671.48px;top:81.3px;width:0.8px;height:2.6px;background:#bcbcbc"></div>
<div class="abs" style="left:675.444px;top:82.3px;width:1px;height:1px;background:#cacaca"></div>
<div class="abs" style="left:687.636px;top:82.3px;width:1px;height:1px;background:#cacaca"></div>
<div class="abs" style="left:691.8px;top:81.3px;width:0.8px;height:2.6px;background:#bcbcbc"></div>
<div class="abs" style="left:695.764px;top:82.3px;width:1px;height:1px;background:#cacaca"></div>
<div class="abs" style="left:707.956px;top:82.3px;width:1px;height:1px;background:#cacaca"></div>
<div class="abs" style="left:712.12px;top:81.3px;width:0.8px;height:2.6px;background:#bcbcbc"></div>
<div class="abs" style="left:716.084px;top:82.3px;width:1px;height:1px;background:#cacaca"></div>
<div class="abs" style="left:728.276px;top:82.3px;width:1px;height:1px;background:#cacaca"></div>
<div class="abs" style="left:732.44px;top:81.3px;width:0.8px;height:2.6px;background:#bcbcbc"></div>
<div class="abs" style="left:736.404px;top:82.3px;width:1px;height:1px;background:#cacaca"></div>
<div class="abs" style="left:748.596px;top:82.3px;width:1px;height:1px;background:#cacaca"></div>
<div class="abs" style="left:752.76px;top:81.3px;width:0.8px;height:2.6px;background:#bcbcbc"></div>
<div class="abs" style="left:756.724px;top:82.3px;width:1px;height:1px;background:#cacaca"></div>
<div class="abs" style="left:768.916px;top:82.3px;width:1px;height:1px;background:#cacaca"></div>
<div class="abs" style="left:773.08px;top:81.3px;width:0.8px;height:2.6px;background:#bcbcbc"></div>
<div class="abs" style="left:777.044px;top:82.3px;width:1px;height:1px;background:#cacaca"></div>
<div class="abs" style="left:789.236px;top:82.3px;width:1px;height:1px;background:#cacaca"></div>
<div class="abs" style="left:793.4px;top:81.3px;width:0.8px;height:2.6px;background:#bcbcbc"></div>
<div class="abs" style="left:797.364px;top:82.3px;width:1px;height:1px;background:#cacaca"></div>
<div class="abs" style="left:809.556px;top:82.3px;width:1px;height:1px;background:#cacaca"></div>
<div class="abs" style="left:813.72px;top:81.3px;width:0.8px;height:2.6px;background:#bcbcbc"></div>
<div class="abs" style="left:817.684px;top:82.3px;width:1px;height:1px;background:#cacaca"></div>
<div class="abs" style="left:829.876px;top:82.3px;width:1px;height:1px;background:#cacaca"></div>
<div class="abs" style="left:834.04px;top:81.3px;width:0.8px;height:2.6px;background:#bcbcbc"></div>
<div class="abs" style="left:838.004px;top:82.3px;width:1px;height:1px;background:#cacaca"></div>
<div class="abs" style="left:850.196px;top:82.3px;width:1px;height:1px;background:#cacaca"></div>
<div class="abs" style="left:854.36px;top:81.3px;width:0.8px;height:2.6px;background:#bcbcbc"></div>
<div class="abs" style="left:858.324px;top:82.3px;width:1px;height:1px;background:#cacaca"></div>
<div class="abs" style="left:870.516px;top:82.3px;width:1px;height:1px;background:#cacaca"></div>
<div class="abs" style="left:874.68px;top:81.3px;width:0.8px;height:2.6px;background:#bcbcbc"></div>
<div class="abs" style="left:878.644px;top:82.3px;width:1px;height:1px;background:#cacaca"></div>
<div class="t" style="left:165px;top:116.82px;width:16px;height:8px;text-align:center;font-size:8.1px;color:#555;transform:rotate(-90deg);transform-origin:8px 4px">9</div>
<div class="t" style="left:165px;top:137.14px;width:16px;height:8px;text-align:center;font-size:8.1px;color:#555;transform:rotate(-90deg);transform-origin:8px 4px">8</div>
<div class="t" style="left:165px;top:157.46px;width:16px;height:8px;text-align:center;font-size:8.1px;color:#555;transform:rotate(-90deg);transform-origin:8px 4px">7</div>
<div class="t" style="left:165px;top:177.78px;width:16px;height:8px;text-align:center;font-size:8.1px;color:#555;transform:rotate(-90deg);transform-origin:8px 4px">6</div>
<div class="t" style="left:165px;top:198.1px;width:16px;height:8px;text-align:center;font-size:8.1px;color:#555;transform:rotate(-90deg);transform-origin:8px 4px">5</div>
<div class="t" style="left:165px;top:218.42px;width:16px;height:8px;text-align:center;font-size:8.1px;color:#555;transform:rotate(-90deg);transform-origin:8px 4px">4</div>
<div class="t" style="left:165px;top:238.74px;width:16px;height:8px;text-align:center;font-size:8.1px;color:#555;transform:rotate(-90deg);transform-origin:8px 4px">3</div>
<div class="t" style="left:165px;top:259.06px;width:16px;height:8px;text-align:center;font-size:8.1px;color:#555;transform:rotate(-90deg);transform-origin:8px 4px">2</div>
<div class="t" style="left:165px;top:279.38px;width:16px;height:8px;text-align:center;font-size:8.1px;color:#555;transform:rotate(-90deg);transform-origin:8px 4px">1</div>
<div class="t" style="left:165px;top:299.7px;width:16px;height:8px;text-align:center;font-size:8.1px;color:#555;transform:rotate(-90deg);transform-origin:8px 4px">0</div>
<div class="t" style="left:165px;top:320.02px;width:16px;height:8px;text-align:center;font-size:8.1px;color:#555;transform:rotate(-90deg);transform-origin:8px 4px">1</div>
<div class="t" style="left:165px;top:340.34px;width:16px;height:8px;text-align:center;font-size:8.1px;color:#555;transform:rotate(-90deg);transform-origin:8px 4px">2</div>
<div class="t" style="left:165px;top:360.66px;width:16px;height:8px;text-align:center;font-size:8.1px;color:#555;transform:rotate(-90deg);transform-origin:8px 4px">3</div>
<div class="t" style="left:165px;top:380.98px;width:16px;height:8px;text-align:center;font-size:8.1px;color:#555;transform:rotate(-90deg);transform-origin:8px 4px">4</div>
<div class="t" style="left:165px;top:401.3px;width:16px;height:8px;text-align:center;font-size:8.1px;color:#555;transform:rotate(-90deg);transform-origin:8px 4px">5</div>
<div class="t" style="left:165px;top:421.62px;width:16px;height:8px;text-align:center;font-size:8.1px;color:#555;transform:rotate(-90deg);transform-origin:8px 4px">6</div>
<div class="t" style="left:165px;top:441.94px;width:16px;height:8px;text-align:center;font-size:8.1px;color:#555;transform:rotate(-90deg);transform-origin:8px 4px">7</div>
<div class="t" style="left:165px;top:462.26px;width:16px;height:8px;text-align:center;font-size:8.1px;color:#555;transform:rotate(-90deg);transform-origin:8px 4px">8</div>
<div class="t" style="left:165px;top:482.58px;width:16px;height:8px;text-align:center;font-size:8.1px;color:#555;transform:rotate(-90deg);transform-origin:8px 4px">9</div>
<div class="abs" style="left:172.5px;top:114.224px;width:1px;height:1px;background:#cacaca"></div>
<div class="abs" style="left:172.5px;top:126.416px;width:1px;height:1px;background:#cacaca"></div>
<div class="abs" style="left:171.2px;top:130.58px;width:2.6px;height:0.8px;background:#bcbcbc"></div>
<div class="abs" style="left:172.5px;top:134.544px;width:1px;height:1px;background:#cacaca"></div>
<div class="abs" style="left:172.5px;top:146.736px;width:1px;height:1px;background:#cacaca"></div>
<div class="abs" style="left:171.2px;top:150.9px;width:2.6px;height:0.8px;background:#bcbcbc"></div>
<div class="abs" style="left:172.5px;top:154.864px;width:1px;height:1px;background:#cacaca"></div>
<div class="abs" style="left:172.5px;top:167.056px;width:1px;height:1px;background:#cacaca"></div>
<div class="abs" style="left:171.2px;top:171.22px;width:2.6px;height:0.8px;background:#bcbcbc"></div>
<div class="abs" style="left:172.5px;top:175.184px;width:1px;height:1px;background:#cacaca"></div>
<div class="abs" style="left:172.5px;top:187.376px;width:1px;height:1px;background:#cacaca"></div>
<div class="abs" style="left:171.2px;top:191.54px;width:2.6px;height:0.8px;background:#bcbcbc"></div>
<div class="abs" style="left:172.5px;top:195.504px;width:1px;height:1px;background:#cacaca"></div>
<div class="abs" style="left:172.5px;top:207.696px;width:1px;height:1px;background:#cacaca"></div>
<div class="abs" style="left:171.2px;top:211.86px;width:2.6px;height:0.8px;background:#bcbcbc"></div>
<div class="abs" style="left:172.5px;top:215.824px;width:1px;height:1px;background:#cacaca"></div>
<div class="abs" style="left:172.5px;top:228.016px;width:1px;height:1px;background:#cacaca"></div>
<div class="abs" style="left:171.2px;top:232.18px;width:2.6px;height:0.8px;background:#bcbcbc"></div>
<div class="abs" style="left:172.5px;top:236.144px;width:1px;height:1px;background:#cacaca"></div>
<div class="abs" style="left:172.5px;top:248.336px;width:1px;height:1px;background:#cacaca"></div>
<div class="abs" style="left:171.2px;top:252.5px;width:2.6px;height:0.8px;background:#bcbcbc"></div>
<div class="abs" style="left:172.5px;top:256.464px;width:1px;height:1px;background:#cacaca"></div>
<div class="abs" style="left:172.5px;top:268.656px;width:1px;height:1px;background:#cacaca"></div>
<div class="abs" style="left:171.2px;top:272.82px;width:2.6px;height:0.8px;background:#bcbcbc"></div>
<div class="abs" style="left:172.5px;top:276.784px;width:1px;height:1px;background:#cacaca"></div>
<div class="abs" style="left:172.5px;top:288.976px;width:1px;height:1px;background:#cacaca"></div>
<div class="abs" style="left:171.2px;top:293.14px;width:2.6px;height:0.8px;background:#bcbcbc"></div>
<div class="abs" style="left:172.5px;top:297.104px;width:1px;height:1px;background:#cacaca"></div>
<div class="abs" style="left:172.5px;top:309.296px;width:1px;height:1px;background:#cacaca"></div>
<div class="abs" style="left:171.2px;top:313.46px;width:2.6px;height:0.8px;background:#bcbcbc"></div>
<div class="abs" style="left:172.5px;top:317.424px;width:1px;height:1px;background:#cacaca"></div>
<div class="abs" style="left:172.5px;top:329.616px;width:1px;height:1px;background:#cacaca"></div>
<div class="abs" style="left:171.2px;top:333.78px;width:2.6px;height:0.8px;background:#bcbcbc"></div>
<div class="abs" style="left:172.5px;top:337.744px;width:1px;height:1px;background:#cacaca"></div>
<div class="abs" style="left:172.5px;top:349.936px;width:1px;height:1px;background:#cacaca"></div>
<div class="abs" style="left:171.2px;top:354.1px;width:2.6px;height:0.8px;background:#bcbcbc"></div>
<div class="abs" style="left:172.5px;top:358.064px;width:1px;height:1px;background:#cacaca"></div>
<div class="abs" style="left:172.5px;top:370.256px;width:1px;height:1px;background:#cacaca"></div>
<div class="abs" style="left:171.2px;top:374.42px;width:2.6px;height:0.8px;background:#bcbcbc"></div>
<div class="abs" style="left:172.5px;top:378.384px;width:1px;height:1px;background:#cacaca"></div>
<div class="abs" style="left:172.5px;top:390.576px;width:1px;height:1px;background:#cacaca"></div>
<div class="abs" style="left:171.2px;top:394.74px;width:2.6px;height:0.8px;background:#bcbcbc"></div>
<div class="abs" style="left:172.5px;top:398.704px;width:1px;height:1px;background:#cacaca"></div>
<div class="abs" style="left:172.5px;top:410.896px;width:1px;height:1px;background:#cacaca"></div>
<div class="abs" style="left:171.2px;top:415.06px;width:2.6px;height:0.8px;background:#bcbcbc"></div>
<div class="abs" style="left:172.5px;top:419.024px;width:1px;height:1px;background:#cacaca"></div>
<div class="abs" style="left:172.5px;top:431.216px;width:1px;height:1px;background:#cacaca"></div>
<div class="abs" style="left:171.2px;top:435.38px;width:2.6px;height:0.8px;background:#bcbcbc"></div>
<div class="abs" style="left:172.5px;top:439.344px;width:1px;height:1px;background:#cacaca"></div>
<div class="abs" style="left:172.5px;top:451.536px;width:1px;height:1px;background:#cacaca"></div>
<div class="abs" style="left:171.2px;top:455.7px;width:2.6px;height:0.8px;background:#bcbcbc"></div>
<div class="abs" style="left:172.5px;top:459.664px;width:1px;height:1px;background:#cacaca"></div>
<div class="abs" style="left:172.5px;top:471.856px;width:1px;height:1px;background:#cacaca"></div>
<div class="abs" style="left:171.2px;top:476.02px;width:2.6px;height:0.8px;background:#bcbcbc"></div>
<div class="abs" style="left:172.5px;top:479.984px;width:1px;height:1px;background:#cacaca"></div>
<div class="abs" style="left:172.5px;top:492.176px;width:1px;height:1px;background:#cacaca"></div>
<svg class="abs" style="left:438px;top:220px" width="20" height="16" viewBox="0 0 20 16"><rect x="1.100" y="2.600" width="14.400" height="10.200" fill="#f5c3a6"/><path d="M1.100 2.900h14.400M15.200 2.600v10.200" stroke="#d9cdc6" stroke-width="0.600" fill="none"/><path d="M1.500 2.600v10.200M1.100 12.400h14.400" stroke="#dd8c5e" stroke-width="0.900" fill="none"/></svg>
<div class="t" style="left:439.4px;top:223.4px;width:14px;text-align:center;font-size:7.8px;color:#5a5a5a">1</div>
<svg class="abs" style="left:538px;top:297.5px" width="180" height="14" viewBox="0 0 180 14"><path d="M6 6.8h77" stroke="#c79ac4" stroke-width="0.9" stroke-dasharray="2 1.6" fill="none"/><path d="M83 6.8h85" stroke="#d6d6d6" stroke-width="0.9" stroke-dasharray="2 1.4" fill="none"/><path d="M1.6 2.6l4.6 4.2-4.6 4.2z" fill="#ece6c8" stroke="#9a9a9a" stroke-width="0.6"/><path d="M169 2.6l4 4.2-4 4.2z" fill="#f3b798" stroke="#d9653a" stroke-width="0.8"/><path d="M173.6 2.4v9" stroke="#d9653a" stroke-width="1"/></svg>
<div class="abs" style="left:166px;top:516px;width:740px;height:1px;background:#c8c8c8"></div>
<div id="status"></div>
<div class="t s" style="left:5.5px;top:521.8px;word-spacing:0.55px">幻灯片 第 1 张, 共 1 张</div>
<svg class="abs" style="left:98px;top:521px" width="10" height="9" viewBox="0 0 10 9"><path d="M5 1.5C4 .8 2.5.8 1 1v6.5c1.5-.2 3-.2 4 .5 1-.7 2.500-.7 4-.5V1C7.500.8 6 .8 5 1.500zM5 1.500V8" fill="none" stroke="#555" stroke-width="0.7"/></svg>
<div class="t s" style="left:119px;top:521.8px;font-size:7.6px">中文(中国)</div>
<svg class="abs" style="left:163px;top:520.5px" width="11" height="10" viewBox="0 0 11 10"><path d="M8.500 5a3.800 3.800 0 1 0-3 3.700" fill="none" stroke="#555" stroke-width="0.7"/><circle cx="4.800" cy="3" r=".7" fill="#555"/><path d="M3 4.300h3.600M4.800 4.300v2l-1 1.600M4.800 6.300l1 1" fill="none" stroke="#555" stroke-width="0.6"/><path d="M7 6.500l2.500 2.500M9.500 6.500L7 9" stroke="#555" stroke-width="0.7"/></svg>
<div class="t s" style="left:175.7px;top:521.8px;font-size:7.5px">辅助功能: 调查</div>
<svg class="abs" style="left:593.5px;top:520.5px" width="11" height="10" viewBox="0 0 11 10"><path d="M3 4l2.500-2.500L8 4M0.500 6.300h10M0.500 8.600h10" fill="none" stroke="#555" stroke-width="0.7"/></svg>
<div class="t s" style="left:605.7px;top:521.8px;font-size:7.4px">备注</div>
<svg class="abs" style="left:631.5px;top:520.5px" width="11" height="10" viewBox="0 0 11 10"><path d="M1 1h9v5.500H4.500L2.500 8.500V6.500H1z" fill="none" stroke="#555" stroke-width="0.7"/></svg>
<div class="t s" style="left:644px;top:521.8px;font-size:7.4px">批注</div>
<div class="abs" style="left:671.7px;top:518px;width:24px;height:14px;background:#cdcdcd"></div>
<svg class="abs" style="left:678.3px;top:521px" width="10" height="9" viewBox="0 0 10 9"><rect x="0.500" y="0.500" width="9" height="8" fill="none" stroke="#555" stroke-width="0.700"/><path d="M3 0.500v8" stroke="#555" stroke-width="0.700"/><rect x="4.300" y="2" width="4" height="3" fill="none" stroke="#555" stroke-width="0.600"/></svg>
<svg class="abs" style="left:703.5px;top:521px" width="10" height="9" viewBox="0 0 10 9"><g fill="none" stroke="#666" stroke-width="0.700"><rect x="0.500" y="0.500" width="3.500" height="3"/><rect x="6" y="0.500" width="3.500" height="3"/><rect x="0.500" y="5.500" width="3.500" height="3"/><rect x="6" y="5.500" width="3.500" height="3"/></g></svg>
<svg class="abs" style="left:728.6px;top:521px" width="10" height="9" viewBox="0 0 10 9"><g fill="none" stroke="#666" stroke-width="0.700"><rect x="2" y="0.500" width="6" height="8"/><path d="M3.500 1.500v6M6.500 1.500v6M5 0.500v8"/></g></svg>
<svg class="abs" style="left:753px;top:521px" width="10" height="9" viewBox="0 0 10 9"><g fill="none" stroke="#666" stroke-width="0.700"><path d="M0.500 0.800h9M1.500 0.800v4.200h7V0.800M5 5v2.500M3 8.200h4"/></g></svg>
<div class="abs" style="left:775.5px;top:525.3px;width:4.5px;height:0.8px;background:#666"></div>
<div class="abs" style="left:784px;top:525.3px;width:62px;height:0.8px;background:#adadad"></div>
<div class="abs" style="left:815px;top:523.5px;width:0.8px;height:4.5px;background:#9a9a9a"></div>
<div class="abs" style="left:809.8px;top:521.5px;width:2.4px;height:8.5px;background:#444"></div>
<svg class="abs" style="left:848.8px;top:522.3px" width="7" height="7" viewBox="0 0 7 7"><path d="M3.500 1.200v4.600M1.200 3.500h4.600" stroke="#777" stroke-width="0.700"/></svg>
<div class="t s" style="left:863.5px;top:522px;font-size:7.600px;color:#555">86%</div>
<svg class="abs" style="left:885.8px;top:520px" width="11" height="11" viewBox="0 0 11 11"><rect x="3.500" y="3.500" width="4" height="4" fill="none" stroke="#555" stroke-width="0.700"/><path d="M5.500 0.500L4 2.300h3zM5.500 10.500L4 8.700h3zM0.500 5.500L2.300 4v3zM10.500 5.500L8.700 4v3z" fill="#777"/></svg>
</div>
<div class="abs" style="left:600.6px;top:50.3px;width:42.400px;height:42.600px;border-radius:50%;background:rgba(250,245,172,.84)"></div>
<svg class="abs" style="left:619px;top:69px" width="12" height="16" viewBox="0 0 12 16"><path d="M2.1 2.1v10.3l2.4-2.2 1.7 3.8 1.6-.7-1.7-3.7h3.4z" fill="#fff" stroke="#6a6a6a" stroke-width="0.7" stroke-linejoin="round"/><path d="M2.1 2.1l7.400 7.500" stroke="#e0653a" stroke-width="0.8"/></svg>
</body></html>
